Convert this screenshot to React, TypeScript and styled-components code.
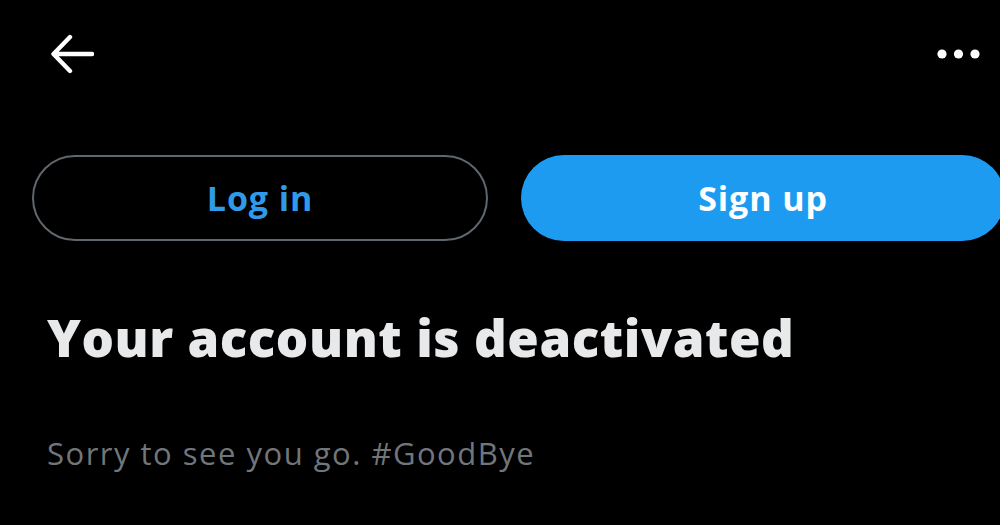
import React from "react";
import styled, { createGlobalStyle } from "styled-components";

const Global = createGlobalStyle`
  html, body { margin: 0; padding: 0; background: #000; }
  body { font-family: "Open Sans", Roboto, "Liberation Sans", sans-serif; }
`;

const Screen = styled.div`
  width: 1000px;
  height: 525px;
  background: #000;
  overflow: hidden;
  display: flex;
  flex-direction: column;
`;

const TopBar = styled.header`
  height: 108px;
  display: flex;
  align-items: center;
  justify-content: space-between;
  padding: 0 18px 0 50px;
  box-sizing: border-box;
  flex-shrink: 0;
`;

const IconButton = styled.button`
  background: none;
  border: 0;
  padding: 0;
  display: flex;
  align-items: center;
  justify-content: center;
  color: #ffffff;
  cursor: pointer;
`;

const ButtonRow = styled.div`
  display: flex;
  gap: 33px;
  padding: 47px 0 0 32px;
  flex-shrink: 0;
`;

const PillButton = styled.button<{ $primary?: boolean; $width: number }>`
  flex-shrink: 0;
  width: ${(p) => p.$width}px;
  height: 86px;
  box-sizing: border-box;
  border-radius: 43px;
  border: ${(p) => (p.$primary ? "0" : "2px solid #5f666d")};
  background: ${(p) => (p.$primary ? "#1d9bf0" : "#000")};
  color: ${(p) => (p.$primary ? "#ffffff" : "#2f9be8")};
  font-family: "Open Sans", Roboto, sans-serif;
  font-weight: 700;
  font-size: 34px;
  letter-spacing: 0.9px;
  display: flex;
  align-items: center;
  justify-content: center;
  padding: 0;
  cursor: pointer;
`;

const Title = styled.h1`
  margin: 66px 0 0 47px;
  font-family: "Open Sans", Roboto, sans-serif;
  font-weight: 800;
  font-size: 51px;
  line-height: 60px;
  letter-spacing: 0.55px;
  color: #e7e9ea;
`;

const Subtitle = styled.p`
  margin: 68px 0 0 47px;
  font-family: "Open Sans", Roboto, sans-serif;
  font-weight: 400;
  font-size: 31px;
  line-height: 36px;
  letter-spacing: 1.5px;
  color: #71767b;
`;

const BackArrow = () => (
  <svg width="44" height="40" viewBox="0 0 44 40" fill="none">
    <path
      d="M4 20 H42 M20 3 L3.5 20 L20 37"
      stroke="currentColor"
      strokeWidth="4.4"
      strokeLinecap="round"
      strokeLinejoin="round"
    />
  </svg>
);

const MoreDots = () => (
  <svg width="46" height="12" viewBox="0 0 46 12" fill="currentColor">
    <circle cx="6" cy="6" r="4.6" />
    <circle cx="22.5" cy="6" r="4.6" />
    <circle cx="39" cy="6" r="4.6" />
  </svg>
);

export default function App() {
  return (
    <>
      <Global />
      <Screen>
        <TopBar>
          <IconButton aria-label="Back">
            <BackArrow />
          </IconButton>
          <IconButton aria-label="More">
            <MoreDots />
          </IconButton>
        </TopBar>
        <ButtonRow>
          <PillButton $width={456}>Log in</PillButton>
          <PillButton $primary $width={484}>Sign up</PillButton>
        </ButtonRow>
        <Title>Your account is deactivated</Title>
        <Subtitle>Sorry to see you go. #GoodBye</Subtitle>
      </Screen>
    </>
  );
}
